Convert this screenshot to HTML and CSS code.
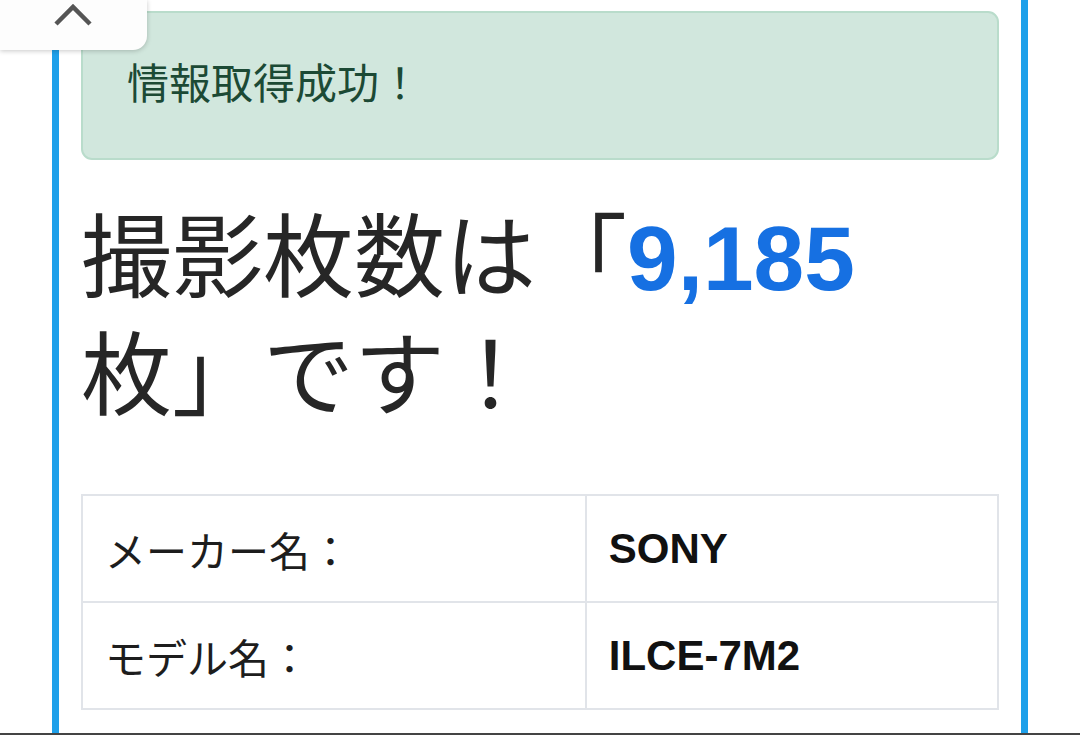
FILE: index.html
```html
<html>
	<head>
		<meta charset="utf-8" />
		<title>撮影枚数チェック</title>
		<meta name="viewport" content="width=device-width, initial-scale=1.0" />
		<link rel="stylesheet" href="styles.css">
	</head>

	<body>
		<div class="topTab">
			<svg class="chevron" width="44" height="30" viewBox="0 0 44 30">
				<path d="M4 24 L21 7 L38 24" fill="none" stroke="#555" stroke-width="4.5" stroke-linecap="butt" stroke-linejoin="miter" />
			</svg>
		</div>
		<div class="wrapper">
			<div class="alertSuccess">情報取得成功！</div>
			<h1 class="result">撮影枚数は「<span class="count">9,185</span>枚」です！</h1>
			<table class="infoTable">
				<tr>
					<td class="label">メーカー名：</td>
					<td class="value">SONY</td>
				</tr>
				<tr>
					<td class="label">モデル名：</td>
					<td class="value">ILCE-7M2</td>
				</tr>
			</table>
		</div>
		<div class="bottomEdge"></div>
	</body>
</html>
```

FILE: styles.css
```css
	* {margin: 0; padding: 0; box-sizing: border-box;}
	body {background: #fff; color: #212529; font-family: "Liberation Sans", "Noto Sans CJK JP", sans-serif; overflow: hidden;}
/*wrapper*/
	.wrapper {width: 976px; min-height: 735px; margin-left: 52px; padding: 11px 22px 0; border-left: 7px solid #1ea0ea; border-right: 7px solid #1ea0ea;}
/*top tab*/
	.topTab {position: absolute; left: 0; top: 0; width: 147px; height: 50px; background: #fdfdfd; border-bottom-right-radius: 14px; box-shadow: 0 1px 5px rgba(0,0,0,0.22); z-index: 2;}
	.chevron {position: absolute; left: 52px; top: 0;}
/*alert*/
	.alertSuccess {height: 149px; padding: 0 44px 10px; display: flex; align-items: center; background: #d1e7dd; border: 2px solid #b9dccb; border-radius: 11px; color: #1c4a35; font-size: 42px;}
/*headline*/
	.result {margin-top: 40px; font-size: 91px; line-height: 118px; font-weight: 400; color: #262626; text-spacing-trim: space-all;}
	.result .count {color: #1670e2; font-weight: 700;}
/*table*/
	.infoTable {width: 100%; margin-top: 58px; border-collapse: collapse;}
	.infoTable td {height: 107px; padding: 0 22px; border: 2px solid #e1e4e9; vertical-align: middle;}
	.infoTable .label {width: 55%; font-size: 41px; font-weight: 400; color: #1d1d1d;}
	.infoTable .value {font-size: 42px; font-weight: 700; color: #111;}
/*bottom*/
	.bottomEdge {position: fixed; left: 0; bottom: 0; width: 100%; height: 2px; background: #444;}
```
